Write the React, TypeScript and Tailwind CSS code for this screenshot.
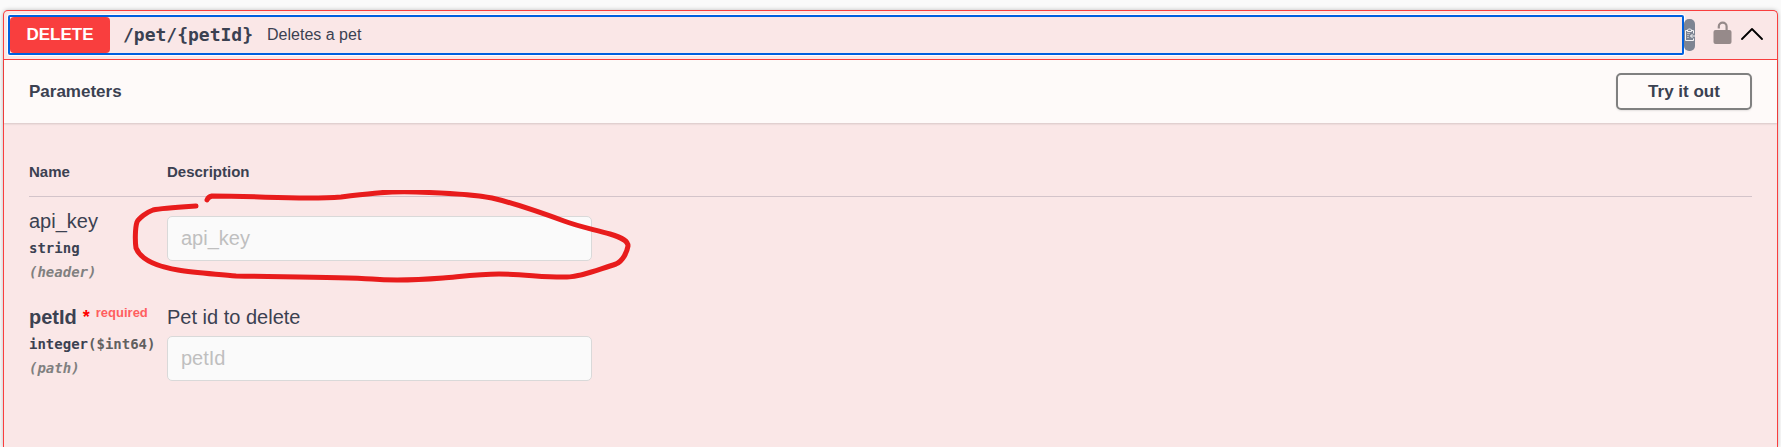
import React from "react";

const mono = "font-['DejaVu_Sans_Mono',monospace]";

type Parameter = {
  name: string;
  type: string;
  format?: string;
  location: string;
  required?: boolean;
  description?: string;
};

const parameters: Parameter[] = [
  { name: "api_key", type: "string", location: "header" },
  {
    name: "petId",
    type: "integer",
    format: "$int64",
    location: "path",
    required: true,
    description: "Pet id to delete",
  },
];

function ClipboardIcon() {
  return (
    <svg viewBox="0 0 11 14" className="h-[14px] w-[11px]" fill="none" stroke="#fff" strokeWidth="0.900" aria-hidden="true">
      <path d="M3.500 2.500H1.500v10h8v-2M7.500 2.500h2v3M3.500 3.500v-1.500l1-1h2l1 1v1.500z" />
      <path d="M3 5.500h3M3 7.500h2M3 9.500h2" strokeOpacity="0.5" />
      <path d="M11 8H6.500M8.500 6 6.500 8l2 2" />
    </svg>
  );
}

function UnlockedIcon() {
  return (
    <svg viewBox="0 0 19 24" className="h-6 w-[19px]" aria-hidden="true">
      <path d="M5.800 7.500V5.500a3.900 3.900 0 0 1 7.800 0V10" fill="none" stroke="#968a8a" strokeWidth="2.200" />
      <rect x="0.500" y="9" width="18" height="14" rx="2" fill="#968a8a" />
    </svg>
  );
}

function ChevronIcon() {
  return (
    <svg viewBox="0 0 22 12" className="h-3 w-[22px]" fill="none" stroke="#000" strokeWidth="1.800" aria-hidden="true">
      <path d="M1 11 11 1 21 11" strokeLinecap="round" strokeLinejoin="round" />
    </svg>
  );
}

function Annotation() {
  return (
    <svg
      viewBox="0 0 500 95"
      className="pointer-events-none absolute top-[-7px] left-[103px] h-[95px] w-[500px]"
      fill="none"
      stroke="#e81c1c"
      strokeWidth="5"
      strokeLinecap="round"
      strokeLinejoin="round"
      aria-hidden="true"
    >
      <path d="M64 16C48 17 30 18 21 20C15 22 7 28 5 32C3 38 3 52 4 58C8 68 22 76 46 80C62 83 85 84 104 86C150 87 205 87 240 89C262 91 285 90 311 88C333 86 348 84 367 84C390 84 418 88 435 87C448 87 462 81 484 74C491 71 495 62 496 56C496 51 491 48 478 44C460 39 445 36 432 31C410 23 382 13 360 8C340 4 315 3 284 2C252 1 234 4 209 7C170 10 130 6 80 6Q76 7 75 10" />
    </svg>
  );
}

function ParameterRow({ parameter, children }: { parameter: Parameter; children?: React.ReactNode }) {
  const { name, type, format, location, required, description } = parameter;
  return (
    <tr className="align-top">
      <td className="pt-3 pb-[9px]">
        <label htmlFor={name} className={required ? "flex h-6 items-center text-xl font-bold" : "flex h-6 items-center text-xl"}>
          {name}
          {required && (
            <>
              <span className="ml-[6px] text-lg text-[#ff0000]">*</span>
              <span className="ml-[6px] pb-[6px] text-[13px] text-[#ff5f5f]">required</span>
            </>
          )}
        </label>
        <div className={`mt-[3px] text-[14px] leading-6 font-bold whitespace-nowrap ${mono}`}>
          {type}
          {format && <span className="text-[#606060]">({format})</span>}
        </div>
        <div className={`text-[14px] leading-6 font-bold text-[#808080] italic ${mono}`}>({location})</div>
      </td>
      <td className="relative pt-3 pb-[9px]">
        {description && <p className="h-6 text-xl leading-6">{description}</p>}
        <input
          id={name}
          type="text"
          placeholder={name}
          className="mt-[7px] block h-[45px] w-full max-w-[425px] rounded-[5px] border border-[#d9d9d9] bg-[#fafafa] px-[13px] text-xl placeholder:text-[#bfbfbf]"
        />
        {children}
      </td>
    </tr>
  );
}

export default function App() {
  return (
    <main className="flex min-h-screen flex-col bg-[#fafafa] px-[3px] pt-[10px] font-['Liberation_Sans',Arial,sans-serif] text-[#3b4151]">
      <section className="flex-1 rounded-t-[5px] border border-b-0 border-[#f93e3e] bg-[#fae7e7] shadow-[0_0_4px_rgba(0,0,0,0.25)]">
        <div className="flex items-center border-b border-[#f93e3e] p-1">
          <button
            type="button"
            className="flex h-10 flex-1 items-center rounded-[2px] border-2 border-[#0060df] text-left shadow-[0_0_0_1px_#fff]"
          >
            <span className="flex h-9 w-[100px] items-center justify-center rounded-[4px] bg-[#f93e3e] text-[17px] font-bold text-white">
              DELETE
            </span>
            <span className={`ml-[13px] text-lg font-bold ${mono}`}>/pet/&#123;petId&#125;</span>
            <span className="ml-[14px] text-base">Deletes a pet</span>
          </button>
          <button
            type="button"
            aria-label="Copy to clipboard"
            className="flex h-8 w-[11px] items-center justify-center overflow-hidden rounded-[5px] bg-[#7d8492]"
          >
            <ClipboardIcon />
          </button>
          <button type="button" aria-label="Authorize" className="ml-[18px] pb-1">
            <UnlockedIcon />
          </button>
          <button type="button" aria-label="Collapse operation" className="mr-[10px] ml-[9px] pb-[3px]">
            <ChevronIcon />
          </button>
        </div>

        <div className="flex h-[63px] items-center justify-between bg-[#fefaf9] px-[25px] shadow-[0_1px_2px_rgba(0,0,0,0.15)]">
          <h4 className="text-[17px] font-bold">Parameters</h4>
          <button
            type="button"
            className="h-[37px] w-[136px] rounded-[5px] border-2 border-[#808080] text-[17px] font-bold shadow-[0_1px_2px_rgba(0,0,0,0.1)]"
          >
            Try it out
          </button>
        </div>

        <div className="px-[25px] pt-[25px] pb-10">
          <table className="w-full table-fixed border-collapse">
            <thead>
              <tr className="h-12 border-b border-[#d3c4ca] text-left text-[15px]">
                <th className="w-[138px] font-bold">Name</th>
                <th className="font-bold">Description</th>
              </tr>
            </thead>
            <tbody>
              <ParameterRow parameter={parameters[0]}>
                <div className="absolute top-0 left-[-138px]">
                  <Annotation />
                </div>
              </ParameterRow>
              <ParameterRow parameter={parameters[1]} />
            </tbody>
          </table>
        </div>
      </section>
    </main>
  );
}
